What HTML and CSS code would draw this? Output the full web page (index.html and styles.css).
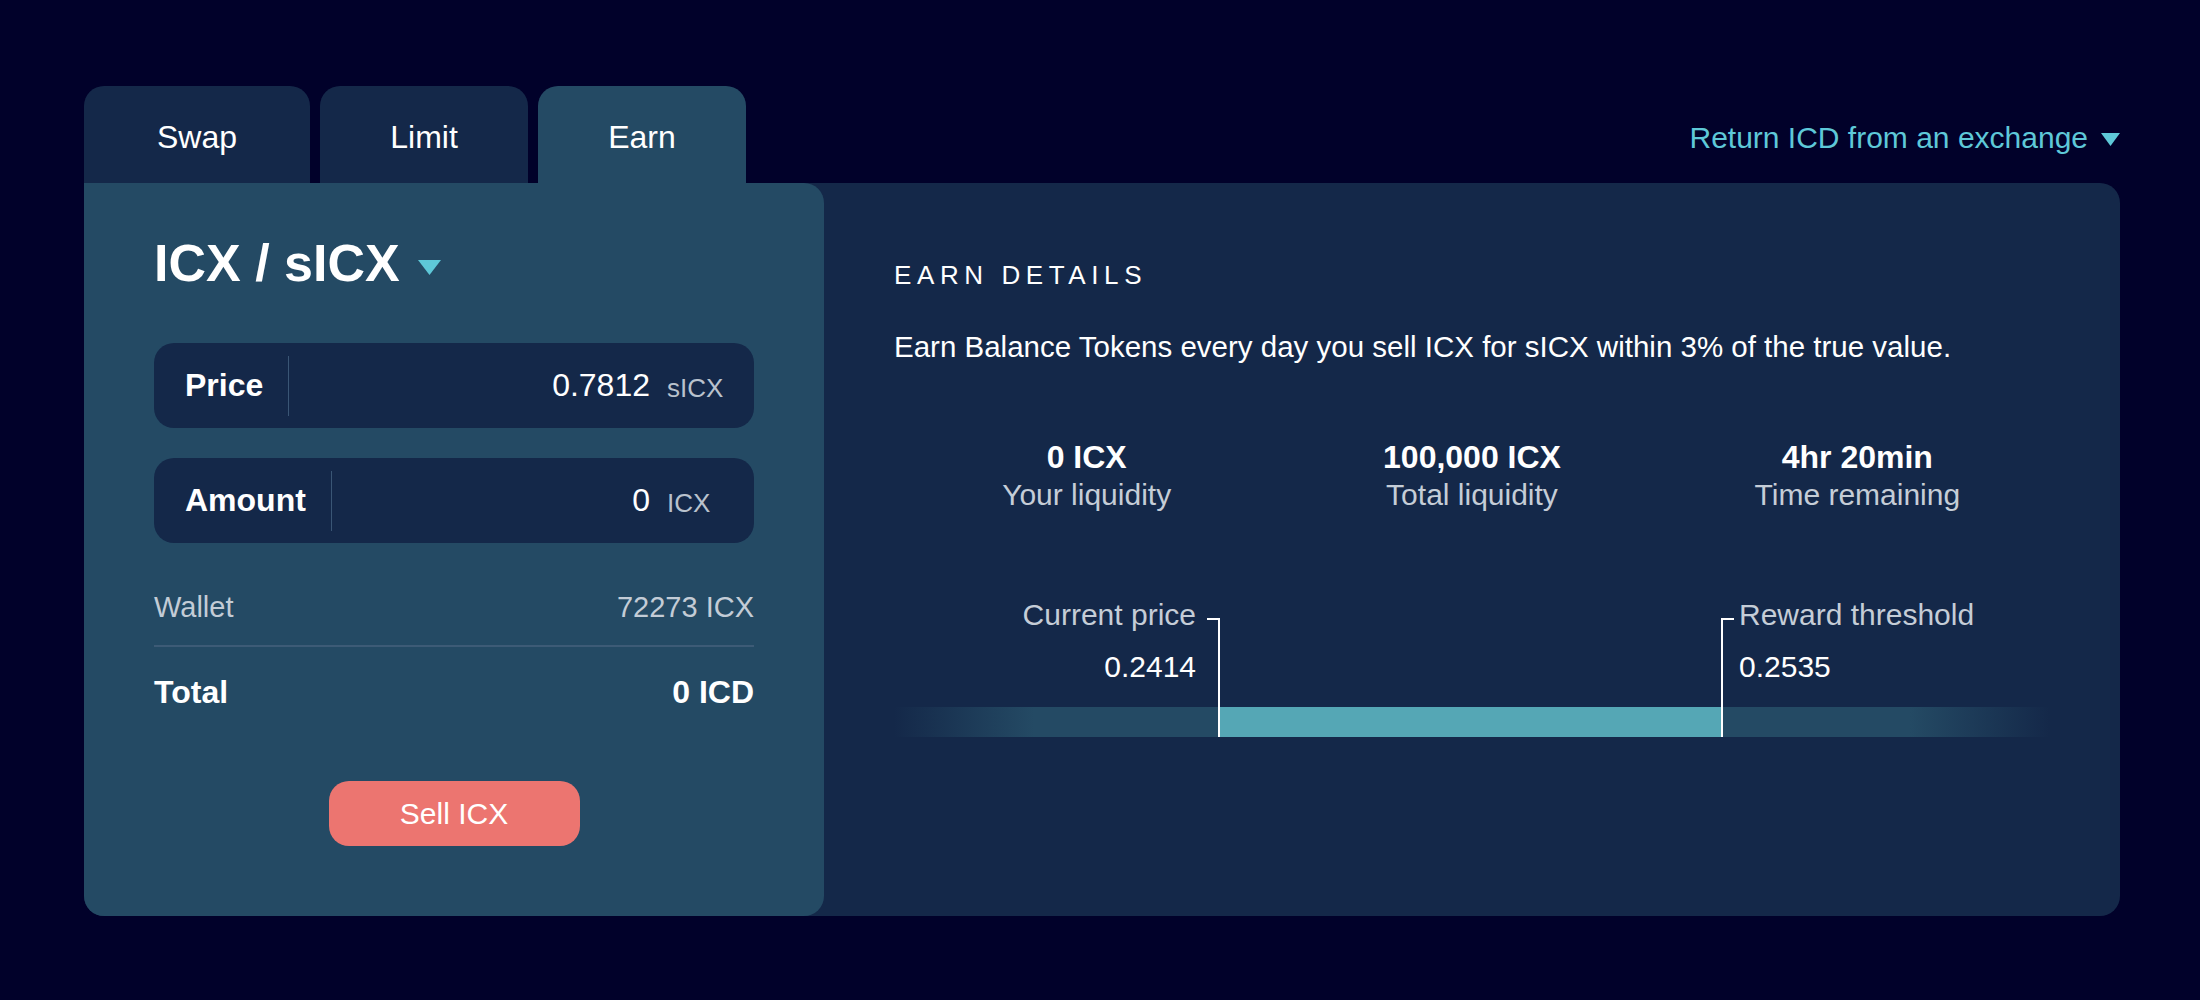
FILE: index.html
```html
<!DOCTYPE html>
<html lang="en">
<head>
<meta charset="utf-8">
<title>Earn</title>
<link rel="stylesheet" href="styles.css">
</head>
<body>
<div class="page">
  <div class="widget">
    <div class="topbar">
      <nav class="tabs">
        <div class="tab tab-wide">Swap</div>
        <div class="tab">Limit</div>
        <div class="tab tab-active">Earn</div>
      </nav>
      <a class="exchange-link">Return ICD from an exchange
        <svg class="caret" width="19" height="13" viewBox="0 0 19 13"><path d="M0 0 H19 L9.5 13 Z" fill="#5ec8d8"/></svg>
      </a>
    </div>
    <div class="panel">
      <section class="trade">
        <h1 class="pair">ICX / sICX
          <svg class="pair-caret" width="23" height="15" viewBox="0 0 23 15"><path d="M0 0 H23 L11.5 15 Z" fill="#5ec8d8"/></svg>
        </h1>
        <div class="field">
          <span class="field-label">Price</span>
          <span class="field-divider"></span>
          <span class="field-value">0.7812</span>
          <span class="field-unit">sICX</span>
        </div>
        <div class="field field-gap">
          <span class="field-label">Amount</span>
          <span class="field-divider"></span>
          <span class="field-value">0</span>
          <span class="field-unit">ICX</span>
        </div>
        <div class="row row-wallet">
          <span>Wallet</span>
          <span>72273 ICX</span>
        </div>
        <div class="rule"></div>
        <div class="row row-total">
          <span>Total</span>
          <span>0 ICD</span>
        </div>
        <button class="sell">Sell ICX</button>
      </section>
      <section class="details">
        <h2 class="details-title">EARN DETAILS</h2>
        <p class="details-text">Earn Balance Tokens every day you sell ICX for sICX within 3% of the true value.</p>
        <div class="stats">
          <div class="stat">
            <div class="stat-value">0 ICX</div>
            <div class="stat-label">Your liquidity</div>
          </div>
          <div class="stat">
            <div class="stat-value">100,000 ICX</div>
            <div class="stat-label">Total liquidity</div>
          </div>
          <div class="stat">
            <div class="stat-value">4hr 20min</div>
            <div class="stat-label">Time remaining</div>
          </div>
        </div>
        <div class="chart">
          <div class="marker marker-left" style="left:28.03%">
            <div class="marker-text">
              <div class="marker-label">Current price</div>
              <div class="marker-value">0.2414</div>
            </div>
          </div>
          <div class="marker marker-right" style="left:71.54%">
            <div class="marker-text">
              <div class="marker-label">Reward threshold</div>
              <div class="marker-value">0.2535</div>
            </div>
          </div>
          <div class="bar">
            <div class="bar-fill" style="left:28.11%;width:43.43%"></div>
          </div>
        </div>
      </section>
    </div>
  </div>
</div>
</body>
</html>
```

FILE: styles.css
```css
* { box-sizing: border-box; }

html, body {
  margin: 0;
  padding: 0;
  background: #01012a;
}

body {
  font-family: "Liberation Sans", Arial, sans-serif;
  color: #ffffff;
  width: 2200px;
  height: 1000px;
  overflow: hidden;
}

.page {
  padding: 86px 0 0 84px;
}

.widget {
  width: 2036px;
}

.topbar {
  display: flex;
  justify-content: space-between;
  align-items: flex-end;
}

.tabs {
  display: flex;
  gap: 10px;
}

.tab {
  width: 208px;
  height: 97px;
  padding-top: 31px;
  font-size: 32px;
  line-height: 40px;
  text-align: center;
  background: #142849;
  border-radius: 20px 20px 0 0;
  color: #ffffff;
}

.tab-wide { width: 226px; }

.tab-active { background: #244a64; }

.exchange-link {
  display: flex;
  align-items: center;
  gap: 13px;
  margin-bottom: 27px;
  font-size: 30px;
  line-height: 36px;
  color: #5ec8d8;
  text-decoration: none;
}

.caret { margin-top: 3px; }

.panel {
  display: flex;
  background: #142849;
  border-radius: 0 20px 20px 20px;
}

.trade {
  width: 740px;
  flex: none;
  padding: 50px 70px 70px 70px;
  background: #244a64;
  border-radius: 0 20px 20px 20px;
  display: flex;
  flex-direction: column;
}

.pair {
  margin: 0;
  display: flex;
  align-items: center;
  gap: 18px;
  font-size: 52px;
  line-height: 60px;
  font-weight: 700;
}

.pair-caret { margin-top: 8px; }

.field {
  margin-top: 50px;
  height: 85px;
  display: flex;
  align-items: center;
  padding: 0 29px 0 31px;
  background: #142849;
  border-radius: 20px;
}

.field-gap { margin-top: 30px; }

.field-label {
  font-size: 32px;
  font-weight: 700;
  padding-right: 25px;
}

.field-divider {
  width: 1px;
  height: 60px;
  background: #3a5675;
}

.field-value {
  flex: 1;
  text-align: right;
  font-size: 32px;
}

.field-unit {
  width: 58px;
  margin-left: 17px;
  font-size: 26px;
  color: #b9c2cd;
  padding-top: 5px;
}

.row {
  display: flex;
  justify-content: space-between;
}

.row-wallet {
  margin-top: 46px;
  font-size: 29px;
  line-height: 36px;
  color: #c3ccd6;
}

.rule {
  margin-top: 20px;
  height: 2px;
  background: #3d5b76;
}

.row-total {
  margin-top: 25px;
  font-size: 32px;
  line-height: 40px;
  font-weight: 700;
}

.sell {
  margin: 69px auto 0 auto;
  width: 251px;
  height: 65px;
  border: none;
  border-radius: 20px;
  background: #ec7570;
  color: #ffffff;
  font-family: inherit;
  font-size: 30px;
  display: flex;
  align-items: center;
  justify-content: center;
  padding: 0;
}

.details {
  flex: 1;
  padding: 76px 70px 0 70px;
}

.details-title {
  margin: 0;
  font-size: 26px;
  line-height: 32px;
  font-weight: 400;
  letter-spacing: 5.6px;
}

.details-text {
  margin: 38px 0 0 0;
  font-size: 29.5px;
  line-height: 36px;
}

.stats {
  margin-top: 72px;
  display: grid;
  grid-template-columns: repeat(3, 1fr);
  text-align: center;
}

.stat-value {
  font-size: 32px;
  line-height: 40px;
  font-weight: 700;
}

.stat-label {
  font-size: 30px;
  line-height: 36px;
  color: #c5cdd7;
}

.chart {
  position: relative;
  margin-top: 84px;
  padding-top: 110px;
}

.bar {
  position: relative;
  height: 30px;
  background: linear-gradient(to right, rgba(36,74,100,0) 0, #244a64 140px, #244a64 calc(100% - 140px), rgba(36,74,100,0) 100%);
}

.bar-fill {
  position: absolute;
  top: 0;
  bottom: 0;
  background: #55a7b5;
}

.marker {
  position: absolute;
  top: 21px;
  bottom: 0;
  width: 0;
  border-left: 2px solid #ffffff;
  z-index: 2;
}

.marker::before {
  content: "";
  position: absolute;
  top: 0;
  width: 11px;
  height: 2px;
  background: #ffffff;
}

.marker-left::before { left: -13px; }
.marker-right::before { left: 0; }

.marker-text {
  position: absolute;
  top: -21px;
  white-space: nowrap;
}

.marker-left .marker-text { right: 24px; text-align: right; }
.marker-right .marker-text { left: 16px; text-align: left; }

.marker-label {
  font-size: 30px;
  line-height: 36px;
  color: #c5cdd7;
}

.marker-value {
  margin-top: 16px;
  font-size: 30px;
  line-height: 36px;
  color: #ffffff;
}
```
